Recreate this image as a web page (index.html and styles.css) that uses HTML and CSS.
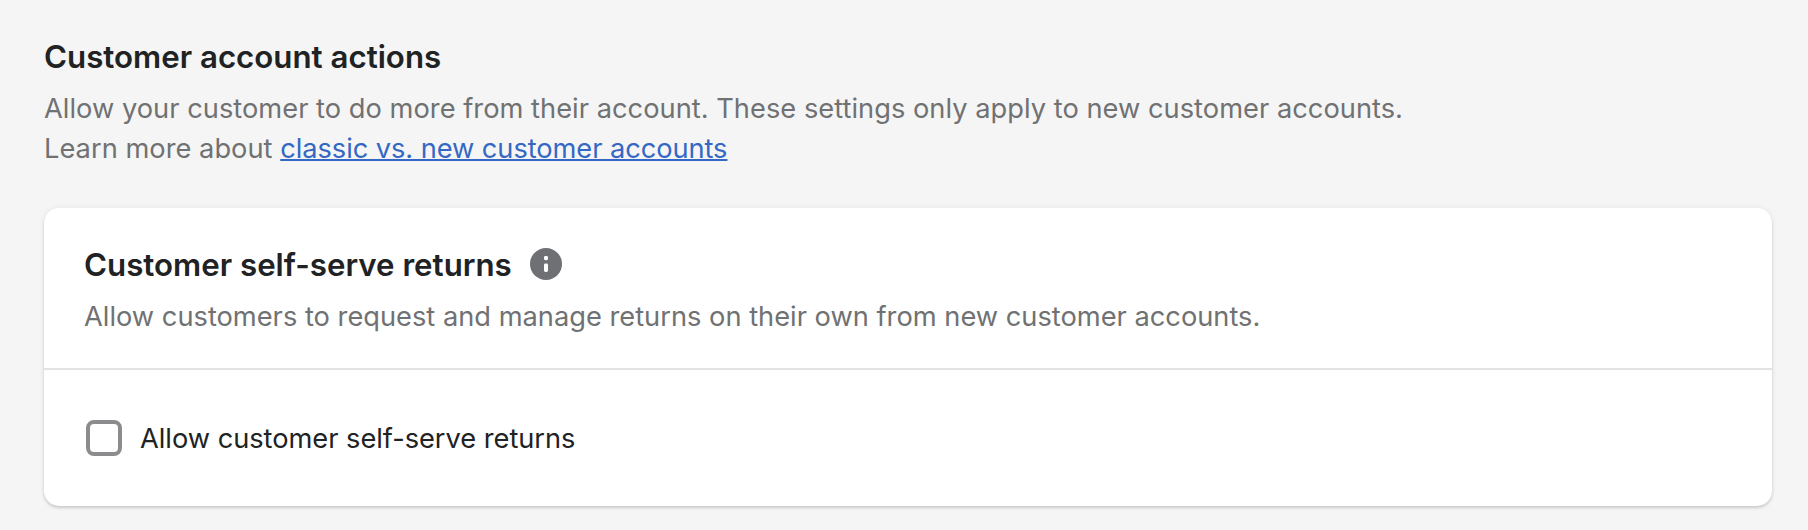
FILE: index.html
```html
<!DOCTYPE html>
<html lang="en">
<head>
  <meta charset="UTF-8" />
  <title>Customer account actions</title>
  <link rel="stylesheet" href="styles.css">
</head>
<body>
  <section class="settings">
    <header class="settings-header">
      <h2>Customer account actions</h2>
      <p>Allow your customer to do more from their account. These settings only apply to new customer accounts.<br>
      Learn more about <a href="#">classic vs. new customer accounts</a></p>
    </header>

    <div class="card">
      <div class="card-header">
        <div class="card-title">
          <h3>Customer self-serve returns</h3>
          <svg class="info-icon" viewBox="0 0 32 32" aria-hidden="true">
            <circle cx="16" cy="16" r="16" fill="#6e7073"/>
            <rect x="14" y="8" width="4" height="4.2" rx="1.4" fill="#fff"/>
            <rect x="14" y="15.6" width="4" height="8.4" rx="1.4" fill="#fff"/>
          </svg>
        </div>
        <p>Allow customers to request and manage returns on their own from new customer accounts.</p>
      </div>
      <label class="card-row">
        <input type="checkbox" class="checkbox">
        <span class="row-label">Allow customer self-serve returns</span>
      </label>
    </div>
  </section>
</body>
</html>
```
FILE: styles.css
```css
* { box-sizing: border-box; font-family: 'Inter', sans-serif; }

body {
  margin: 0;
  background: #f5f5f5;
  color: #202223;
  font-size: 27.25px;
  line-height: 40px;
}

h2, h3, p { margin: 0; }

h2, h3 {
  font-size: 31.25px;
  font-weight: 600;
  line-height: 40px;
  white-space: nowrap;
}

p { color: #707172; white-space: nowrap; }

a {
  color: #3468c4;
  letter-spacing: -0.07px;
  text-decoration-thickness: 2px;
}

.settings { padding: 37px 36px 24px 44px; }

.settings-header { margin-bottom: 39px; }
.settings-header p {
  margin-top: 12px;
  letter-spacing: 0.02px;
}

.card {
  background: #fff;
  border-radius: 15px;
  box-shadow: 0 0 6px rgba(23, 24, 24, 0.06), 0 2px 3px rgba(0, 0, 0, 0.15);
}

.card-header {
  padding: 37px 40px 31px;
  border-bottom: 2px solid #e1e2e3;
}

.card-header p { margin-top: 12px; }

.card-title {
  display: flex;
  align-items: center;
  gap: 18px;
}

.info-icon {
  width: 32px;
  height: 32px;
  margin-top: -2px;
}

.card-row {
  display: flex;
  align-items: center;
  height: 136px;
  padding: 0 42px;
  gap: 18px;
}

.row-label {
  padding-top: 1px;
  letter-spacing: -0.03px;
}

.checkbox {
  appearance: none;
  width: 36px;
  height: 36px;
  margin: 0;
  border: 4px solid #8c8c8e;
  border-radius: 8px;
  background: #fff;
}
```
